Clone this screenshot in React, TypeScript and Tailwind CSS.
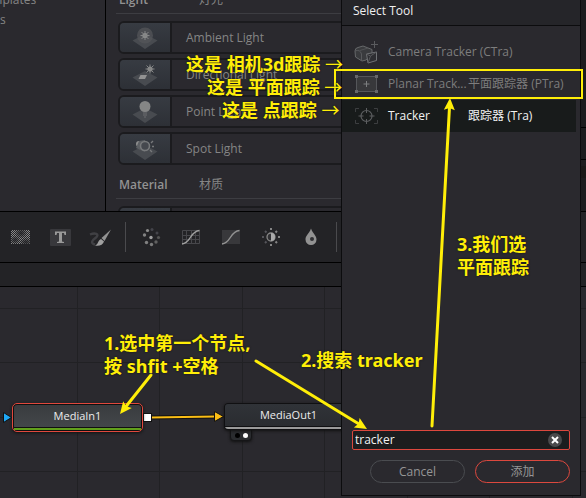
import type { ReactNode } from "react";

const UI = "font-['Open_Sans','Noto_Sans_CJK_SC',sans-serif]";
const NOTE =
  "absolute whitespace-pre font-['Noto_Sans','Noto_Sans_CJK_SC',sans-serif] text-[18px] leading-[23px] font-bold text-[#ffee08] [text-shadow:0_0_2px_#111]";

function Plane({ children }: { children: ReactNode }) {
  return (
    <svg width="28" height="24" viewBox="0 0 28 24" aria-hidden="true">
      <path d="M14 8 L26.500 14.500 L14 23 L1.500 14.500 Z" fill="#484b50" />
      {children}
    </svg>
  );
}

function Burst({ cx, cy }: { cx: number; cy: number }) {
  return (
    <g stroke="#858686" strokeWidth="1">
      <circle cx={cx} cy={cy} r="2.6" fill="#8d8e8e" stroke="none" />
      <path
        d={`M${cx} ${cy - 4.5}V${cy + 4.5}M${cx - 4.5} ${cy}H${cx + 4.5}M${cx - 3.5} ${cy - 3.5}L${cx + 3.5} ${cy + 3.5}M${cx + 3.5} ${cy - 3.5}L${cx - 3.5} ${cy + 3.5}`}
      />
    </g>
  );
}

const lights = [
  {
    name: "Ambient Light",
    icon: (
      <Plane>
        <circle cx="14" cy="9.500" r="8" fill="#54565a" opacity="0.75" />
        <Burst cx={14} cy={9.5} />
      </Plane>
    ),
  },
  {
    name: "Directional Light",
    icon: (
      <Plane>
        <path d="M9.500 12H16L14 16H7.500Z" fill="#929292" />
        <Burst cx={19} cy={6} />
      </Plane>
    ),
  },
  {
    name: "Point Light",
    icon: (
      <Plane>
        <circle cx="14" cy="6.500" r="5.500" fill="#858686" />
        <path d="M12 13H16M12 15H16M13 17H15" stroke="#6c6e70" strokeWidth="1" />
      </Plane>
    ),
  },
  {
    name: "Spot Light",
    icon: (
      <Plane>
        <circle cx="8" cy="7" r="3" fill="#8d8e8e" />
        <path d="M8 4L14 3V15L5 11Z" fill="#5c5f63" />
        <circle cx="14" cy="9" r="4.5" fill="#45484e" stroke="#77797b" strokeWidth="1.6" />
        <path d="M20 6L22 4M21 9.500H23M19 13L21 15" stroke="#77797b" strokeWidth="1.4" />
      </Plane>
    ),
  },
];

function SectionHeader({ name, zh }: { name: string; zh: string }) {
  return (
    <div className="ml-[-2px] flex h-[34px] shrink-0 items-end border-b border-[#3d3d42] pb-1 pl-[3px]">
      <h3 className="w-20 text-[12px] leading-[18px] font-semibold text-[#929292]">{name}</h3>
      <span className="text-[12px] leading-[18px]">{zh}</span>
    </div>
  );
}

function ToolCard({ name, icon }: { name: string; icon: ReactNode }) {
  return (
    <button className="flex h-[33px] w-full shrink-0 items-stretch overflow-hidden rounded-[6px] border-2 border-[#1b1b1e] bg-[#2a292e] text-left">
      <span className="flex w-[52px] items-center justify-center border-r-2 border-[#1b1b1e] bg-linear-to-b from-[#373b42] to-[#2d3036]">
        {icon}
      </span>
      <span className="self-center pl-3.5 text-[12px] leading-[18px]">{name}</span>
    </button>
  );
}

function ToolIcon({ label, children }: { label: string; children: ReactNode }) {
  return (
    <button aria-label={label} className="flex w-10 shrink-0 items-center justify-center">
      <svg width="24" height="22" viewBox="0 0 24 22" aria-hidden="true">
        {children}
      </svg>
    </button>
  );
}

function Toolbar() {
  const curve = "M3 18C12 17 11 5 20.500 4.500";
  const dots: [number, number, number, string][] = [
    [8.5, 4.5, 1.6, "#8c8c8c"],
    [13, 3.5, 1.5, "#44444a"],
    [18, 7, 1.5, "#44444a"],
    [19.5, 11.5, 1.6, "#555"],
    [17, 16, 1.7, "#606060"],
    [12.5, 18.5, 1.7, "#7a7a7a"],
    [7.5, 16.5, 1.7, "#808080"],
    [5.5, 9, 1.7, "#828282"],
    [12, 11.5, 1.7, "#a0a0a0"],
  ];
  return (
    <div className="flex h-[51px] shrink-0 items-center overflow-hidden border-b border-black bg-[#232326] text-[#8d8d8d]">
      <ToolIcon label="Fast noise">
        <defs>
          <pattern id="noise" width="2" height="2" patternUnits="userSpaceOnUse">
            <rect width="1" height="1" fill="#8a8a8a" />
            <rect x="1" y="1" width="1" height="1" fill="#8a8a8a" />
          </pattern>
          <radialGradient id="dim">
            <stop offset="0" stopColor="#232326" stopOpacity="0.9" />
            <stop offset="1" stopColor="#232326" stopOpacity="0.1" />
          </radialGradient>
        </defs>
        <rect x="3" y="4" width="19" height="14" fill="url(#noise)" shapeRendering="crispEdges" />
        <ellipse cx="13" cy="7" rx="6" ry="5" fill="url(#dim)" />
        <ellipse cx="7" cy="14" rx="5" ry="4" fill="url(#dim)" />
        <ellipse cx="18" cy="16" rx="6" ry="4" fill="url(#dim)" />
      </ToolIcon>
      <ToolIcon label="Text">
        <rect x="2" y="3" width="21" height="17" rx="1" fill="#38383c" />
        <path d="M7 5.500H18V9H16.500L16 7H14V15.500L16 16V17H9V16L11 15.500V7H9L8.500 9H7Z" fill="#999" />
      </ToolIcon>
      <ToolIcon label="Paint">
        <path d="M2 8.500C7 6.500 12 8 8 11.500C4 14.500 2 17 7 18.500" fill="none" stroke="#404044" strokeWidth="2.4" />
        <path d="M23 3.500L13.500 12L16.500 15Z" fill="#939393" />
        <path d="M13 13L16 15.500C15 19 11 20.500 7 19.500C10.500 18.500 9.500 14.500 13 13Z" fill="#a0a0a0" />
      </ToolIcon>
      <span className="mx-[5px] h-[30px] w-px shrink-0 bg-[#4a4a4d]" />
      <ToolIcon label="Particles">
        {dots.map(([x, y, r, fill]) => (
          <circle key={`${x}-${y}`} cx={x} cy={y} r={r} fill={fill} />
        ))}
      </ToolIcon>
      <ToolIcon label="Color curves">
        <path
          d="M3.500 4.500H20.500V17.500H3.500ZM7.500 4.500V17.500M12.500 4.500V17.500M16.500 4.500V17.500M3.500 9.500H20.500M3.500 13.500H20.500"
          fill="none"
          stroke="#47474b"
        />
        <path d={curve} fill="none" stroke="#a0a0a0" strokeWidth="1.3" />
      </ToolIcon>
      <ToolIcon label="Color corrector">
        <rect x="3" y="4" width="18" height="14" fill="#38383b" />
        <path d={curve} fill="none" stroke="#929292" strokeWidth="1.3" />
      </ToolIcon>
      <ToolIcon label="Brightness and contrast">
        <circle cx="12" cy="11" r="4" fill="#303033" stroke="#888" strokeWidth="1.3" />
        <path d="M12 7A4 4 0 0 1 12 15Z" fill="#aaa" />
        <g strokeWidth="2">
          <path d="M12 2V4M12 18V20M18 5L16.500 6.500M18 17L16.500 15.500M19 11H21" stroke="#858585" />
          <path d="M6 5L7.500 6.500M6 17L7.500 15.500M3 11H5" stroke="#55555a" />
        </g>
      </ToolIcon>
      <ToolIcon label="Blur">
        <path d="M12 2.500C14 8 17.500 9.500 17.500 13.500A5.500 5.500 0 0 1 6.500 13.500C6.500 9.500 10 8 12 2.500Z" fill="#929292" />
        <circle cx="13" cy="13" r="2" fill="#303033" />
      </ToolIcon>
      <span className="mx-[5px] h-[30px] w-px shrink-0 bg-[#4a4a4d]" />
    </div>
  );
}

function NodeGraph() {
  return (
    <div className="relative flex-1 overflow-hidden bg-[#2a292e]">
      <svg className="absolute inset-0 h-full w-full" aria-hidden="true">
        <g stroke="#212124">
          {[77.5, 159.5, 242.5, 324.5, 407.5, 489.5, 572.5].map((x) => (
            <line key={x} x1={x} x2={x} y1="0" y2="100%" />
          ))}
          {[21.5, 75.5, 130.5, 184.5].map((y) => (
            <line key={y} x1="0" x2="100%" y1={y} y2={y} />
          ))}
        </g>
        <path d="M151 130.500L216 129.500" stroke="#111" strokeWidth="4" />
        <path d="M151 130.500L216 129.500" stroke="#fbbd15" strokeWidth="2" />
        <path d="M3.500 125.500L11.500 130.500L3.500 135.500Z" fill="#1ea7f5" stroke="#111" />
        <path d="M214.500 124.500L223.500 129.500L214.500 134.500Z" fill="#fbbd15" stroke="#111" />
        <rect x="143.500" y="126.500" width="8" height="8" fill="#fff" stroke="#111" />
      </svg>
      <div className="absolute top-[116px] left-[12px] flex h-[29px] w-[131px] flex-col overflow-hidden rounded-[5px] border border-[#e0483d] bg-[#101010] p-px shadow-[0_1px_3px_#111]">
        <div className="flex flex-1 items-center justify-center rounded-t-[3px] bg-linear-to-b from-[#393c3f] to-[#43474a] text-[11px] leading-4 text-[#ececec]">
          MediaIn1
        </div>
        <div className="mt-px h-[2px] bg-[#61a01c]" />
      </div>
      <div className="absolute top-[142px] left-[230px] flex h-3 w-[22px] items-center justify-center gap-[3px] rounded-b-[4px] border border-[#151517] bg-[#2a2c2f] shadow-[0_1px_3px_#111]">
        <span className="size-[5px] rounded-full bg-black" />
        <span className="size-[5px] rounded-full bg-white" />
      </div>
      <div className="absolute top-[116px] left-[224px] flex h-[27px] w-[129px] flex-col overflow-hidden rounded-[4px] border border-[#101012] bg-[#101012] shadow-[0_1px_3px_#111]">
        <div className="flex flex-1 items-center justify-center bg-linear-to-b from-[#303338] to-[#2a2c30] text-[11px] leading-4 text-[#ececec]">
          MediaOut1
        </div>
        <div className="mt-px h-[2px] bg-[#9a9a9a]" />
      </div>
    </div>
  );
}

const results = [
  {
    name: "Camera Tracker (CTra)",
    zh: "",
    code: "",
    selected: false,
    icon: (
      <g stroke="#66686a" strokeLinejoin="round">
        <path d="M1 11Q1 8 4 7.500L9 6L18 9.500V14L12 20L8 21L1.500 17Z" fill="#3a3b3e" />
        <path d="M1 11Q6 9 7.500 14V20.500" fill="none" stroke="#58595c" />
        <path d="M6 10.500L14 8" fill="none" stroke="#505154" />
        <path d="M12.500 14L22.500 12V20.500L14 23Z" fill="#2e2e32" stroke="#707275" />
        <path d="M12.500 14L16.500 16L14 23M16.500 16L22.500 12" fill="none" stroke="#58595c" />
        <path d="M20.500 1V8M17 4.500H24" stroke="#5a5b5e" />
      </g>
    ),
  },
  {
    name: "Planar Track...",
    zh: "平面跟踪器",
    code: "(PTra)",
    selected: false,
    icon: (
      <g stroke="#55565a">
        <rect x="2.500" y="4.500" width="20" height="15" fill="#38383b" />
        <path d="M12.500 9V15M9.500 12H15.500" stroke="#7d7e80" />
        <path d="M1 3H4V6H1ZM21 3H24V6H21ZM1 18H4V21H1ZM21 18H24V21H21Z" fill="#66676a" stroke="none" />
      </g>
    ),
  },
  {
    name: "Tracker",
    zh: "跟踪器",
    code: "(Tra)",
    selected: true,
    icon: (
      <g fill="none" stroke="#5c5e60">
        <circle cx="12.500" cy="12" r="5.500" strokeWidth="1.2" />
        <path d="M12.500 4V9M12.500 15V20M4.500 12H9.500M15.500 12H20.500" />
        <path d="M1.500 8V4.500H5M20 4.500H23.500V8M23.500 16V19.500H20M5 19.500H1.500V16" stroke="#3c3e40" />
      </g>
    ),
  },
];

function SelectTool() {
  return (
    <section
      aria-label="Select Tool"
      className="absolute top-0 left-[341px] flex h-[496px] w-[240px] flex-col border border-t-0 border-[#0c0c0e] bg-[#2a292e]"
    >
      <h2 className="flex h-[26px] shrink-0 items-center border-b border-[#0c0c0e] bg-[#252529] pb-1 pl-[11px] text-[12px] leading-[18px] text-[#f0f0f0]">
        Select Tool
      </h2>
      <ul className="mt-2.5 mr-1 flex-1">
        {results.map((r) => (
          <li
            key={r.name}
            className={
              r.selected
                ? "flex h-8 items-center bg-[#181b1b] pl-3 text-[12px] whitespace-nowrap text-[#f2f2f2]"
                : "flex h-8 items-center pl-3 text-[12px] whitespace-nowrap text-[#7d7d7d]"
            }
          >
            <svg width="26" height="24" viewBox="0 0 26 24" className="shrink-0" aria-hidden="true">
              {r.icon}
            </svg>
            <span className={r.zh ? "ml-2 w-20" : "ml-2"}>{r.name}</span>
            {r.zh && (
              <span>
                {r.zh} {r.code}
              </span>
            )}
          </li>
        ))}
      </ul>
      <div className="flex flex-col gap-2.5 pr-2.5 pb-3 pl-2.5">
        <div className="flex h-5 items-center rounded-[2px] border border-[#dc483e] bg-[#1c1d1e] pr-[7px]">
          <input
            aria-label="Search tools"
            defaultValue="tracker"
            className="min-w-0 flex-1 bg-transparent pl-[2px] text-[12px] leading-[18px] text-[#f2f2f2] outline-none"
          />
          <button aria-label="Clear" className="flex size-[14px] items-center justify-center rounded-full bg-[#4a4a4c]">
            <svg width="8" height="8" viewBox="0 0 8 8" aria-hidden="true">
              <path d="M1 1L7 7M7 1L1 7" stroke="#fff" strokeWidth="2" />
            </svg>
          </button>
        </div>
        <div className="flex gap-2.5 pl-[18px]">
          <button className="h-[23px] flex-1 rounded-full border border-[#4a4c50] text-[12px] leading-[18px] text-[#969696]">
            Cancel
          </button>
          <button className="h-[23px] flex-1 rounded-full border border-[#dc483e] text-[12px] leading-[18px] text-[#969696]">
            添加
          </button>
        </div>
      </div>
    </section>
  );
}

function Arrow({ x1, y1, x2, y2 }: { x1: number; y1: number; x2: number; y2: number }) {
  const angle = (Math.atan2(y2 - y1, x2 - x1) * 180) / Math.PI;
  const len = Math.hypot(x2 - x1, y2 - y1);
  return (
    <g transform={`translate(${x1} ${y1}) rotate(${angle})`}>
      <path d={`M0 0H${len - 8}`} stroke="#ffee08" strokeWidth="3" strokeLinecap="round" />
      <path d={`M${len} 0L${len - 12} -5.500L${len - 10} 0L${len - 12} 5.500Z`} fill="#ffee08" />
    </g>
  );
}

function Notes() {
  return (
    <div className="pointer-events-none">
      <div className="absolute top-[69px] left-[334px] h-[30px] w-[249px] border-2 border-[#ffee08]" />
      <svg className="absolute inset-0 h-full w-full" aria-hidden="true">
        <Arrow x1={151} y1={375} x2={120} y2={414} />
        <Arrow x1={256} y1={361} x2={367} y2={429} />
        <Arrow x1={432} y1={426} x2={450} y2={98} />
      </svg>
      <p className={`${NOTE} top-[53px] left-[186px]`}>
        这是 相机3d跟踪 <span className="font-normal">→</span>
      </p>
      <p className={`${NOTE} top-[76px] left-[207px]`}>
        这是 平面跟踪 <span className="font-normal">→</span>
      </p>
      <p className={`${NOTE} top-[99px] left-[222px]`}>
        这是 点跟踪 <span className="font-normal">→</span>
      </p>
      <p className={`${NOTE} top-[332px] left-[104px]`}>{"1.选中第一个节点,\n按 shfit +空格"}</p>
      <p className={`${NOTE} top-[349px] left-[301px]`}>2.搜索 tracker</p>
      <p className={`${NOTE} top-[233px] left-[457px]`}>{"3.我们选\n平面跟踪"}</p>
    </div>
  );
}

export default function App() {
  return (
    <main className={`relative flex min-h-screen flex-col overflow-hidden bg-[#2a292e] text-[#858585] ${UI}`}>
      <div className="flex h-[212px] shrink-0 overflow-hidden border-b border-black">
        <nav className="w-[106px] shrink-0 overflow-hidden border-r border-black text-[12px] leading-[20px]">
          <p className="-mt-2.5 -ml-[22px]">Templates</p>
          <p>s</p>
        </nav>
        <div className="-mt-5 flex min-w-0 flex-1 flex-col pl-3">
          <SectionHeader name="Light" zh="灯光" />
          <div className="mt-[7px] flex flex-col gap-1">
            {lights.map((l) => (
              <ToolCard key={l.name} name={l.name} icon={l.icon} />
            ))}
          </div>
          <SectionHeader name="Material" zh="材质" />
          <div className="mt-[7px]">
            <ToolCard name="Blinn" icon={<Plane>{null}</Plane>} />
          </div>
        </div>
        <aside className="w-10 shrink-0 bg-[#1d1d1f]">
          <div className="h-[128px] border-b border-black" />
          <div className="h-8 border-b border-black" />
          <div className="mt-1.5 h-3 bg-[#1a1918]" />
        </aside>
      </div>
      <Toolbar />
      <div className="h-6 shrink-0 border-b border-black bg-[#232326]" />
      <NodeGraph />
      <SelectTool />
      <Notes />
    </main>
  );
}
